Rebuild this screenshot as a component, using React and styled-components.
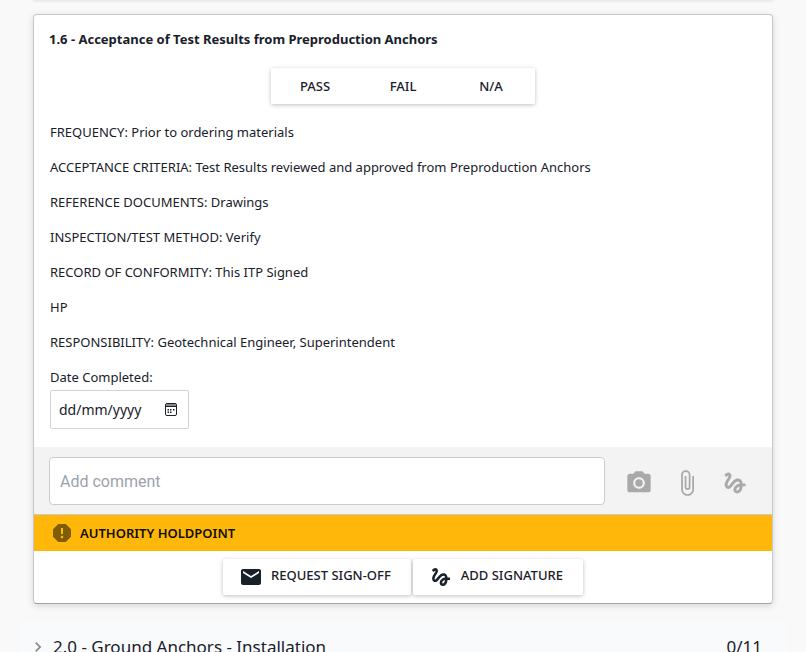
import React, { useState } from "react";
import styled, { createGlobalStyle } from "styled-components";
import {
  MdPhotoCamera,
  MdAttachFile,
  MdGesture,
  MdEmail,
  MdReport,
  MdChevronRight,
} from "react-icons/md";

const INK = "#18202a";
const UI_FONT = '"Segoe UI", "Noto Sans", "Open Sans", sans-serif';

const GlobalStyle = createGlobalStyle`
  *, *::before, *::after { box-sizing: border-box; }
  html, body { margin: 0; height: 100%; overflow: hidden; }
  body { background: #f9f9f9; color: ${INK}; font-family: ${UI_FONT}; font-size: 13px; line-height: 20px; }
  button, input { font: inherit; color: inherit; }
`;

const Page = styled.main`
  display: flex;
  flex-direction: column;
  padding: 0 20px;
`;

const PreviousCard = styled.div`
  height: 0;
  margin: 0 14px;
  box-shadow: 0 0 3px 1px rgba(0, 0, 0, 0.12);
`;

const Card = styled.article`
  margin: 14px 13px 0;
  border: 1px solid #c8c8c8;
  border-bottom-color: #a2a4a4;
  border-radius: 4px;
  background: #fff;
  box-shadow: 0 2px 7px rgba(0, 0, 0, 0.14);
  overflow: hidden;
`;

const CardBody = styled.div`
  padding: 14px 15px 18px;
`;

const Title = styled.h2`
  margin: 0 0 19px;
  font-size: 13px;
  line-height: 20px;
  font-weight: 700;
`;

const RaisedButton = styled.button`
  display: flex;
  align-items: center;
  justify-content: center;
  gap: 8px;
  height: 36px;
  padding: 0 20px 0 16px;
  border: 0;
  border-radius: 2px;
  background: #fff;
  font-weight: 500;
  cursor: pointer;
  box-shadow: 0 1px 4px rgba(0, 0, 0, 0.26);
`;

const ButtonLabel = styled.span`
  padding-bottom: 4px;
`;

const ChoiceGroup = styled.div`
  display: flex;
  width: fit-content;
  margin: 0 auto 18px;
  border-radius: 2px;
  box-shadow: 0 1px 4px rgba(0, 0, 0, 0.26);
`;

const ChoiceButton = styled(RaisedButton)`
  min-width: 88px;
  padding: 0 8px;
  box-shadow: none;
`;

const Detail = styled.p`
  margin: 0 0 15px;
  padding-left: 1px;
`;

const DateField = styled.div`
  display: flex;
  flex-direction: column;
  align-items: flex-start;
  padding-left: 1px;
  gap: 3px;
`;

const DateBox = styled.div`
  display: flex;
  align-items: center;
  width: 139px;
  height: 39px;
  padding: 0 10px 0 8px;
  border: 1px solid #d0d2d4;
  border-radius: 2px;
`;

const DateInput = styled.input`
  flex: 1;
  min-width: 0;
  padding: 0;
  border: 0;
  outline: 0;
  background: none;
  font-size: 14px;
  &::placeholder { color: ${INK}; opacity: 1; }
`;

const IconButton = styled.button`
  display: grid;
  place-items: center;
  padding: 0;
  border: 0;
  background: none;
  color: ${(p) => (p.$muted ? "#a9a9a9" : INK)};
  cursor: pointer;
`;

const CommentBar = styled.div`
  display: flex;
  align-items: center;
  padding: 10px 23px 9px 15px;
  background: #f3f3f3;
  border-bottom: 1px solid #c8c8c8;
`;

const CommentInput = styled.input`
  flex: 1;
  min-width: 0;
  height: 48px;
  padding: 0 10px;
  border: 1px solid #cbcccd;
  border-radius: 4px;
  background: #fff;
  outline: 0;
  font-family: Roboto, sans-serif;
  font-size: 16px;
  &::placeholder { color: #9da2ac; opacity: 1; }
`;

const CommentActions = styled.div`
  display: flex;
  gap: 20px;
  padding: 3px 0 0 20px;
`;

const ActionButton = styled(IconButton)`
  width: 28px;
  height: 28px;
`;

const Holdpoint = styled.div`
  display: flex;
  align-items: center;
  gap: 6px;
  height: 36px;
  padding: 0 16px;
  background: #ffb80a;
  color: #130f05;
  font-weight: 600;
  svg { color: #805c05; }
`;

const CardFooter = styled.footer`
  display: flex;
  justify-content: center;
  gap: 2px;
  padding: 8px;
`;

const SectionHeader = styled.section`
  display: flex;
  align-items: center;
  height: 52px;
  margin-top: 17px;
  padding: 0 24px 0 8px;
  background: #f8fafc;
`;

const SectionTitle = styled.h2`
  flex: 1;
  margin: 0 0 0 5px;
  font-size: 17px;
  font-weight: 400;
`;

const SectionCount = styled.span`
  font-size: 17px;
`;

const CalendarIcon = () => (
  <svg width="14" height="14" viewBox="0 0 14 14" aria-hidden="true">
    <rect x="1.5" y="0.5" width="11" height="12" rx="1.5" fill="none" stroke="currentColor" />
    <path d="M2 1h10v2H2z" fill="#888" />
    <path d="M2 3.5h10" stroke="currentColor" />
    <path
      d="M6 6h1.5v1.5H6zM9 6h1.5v1.5H9zM3.5 8.5H5V10H3.5zM6 8.5h1.5V10H6zM3.5 6H5v1.5H3.5z"
      fill="currentColor"
    />
  </svg>
);

const details = [
  "FREQUENCY: Prior to ordering materials",
  "ACCEPTANCE CRITERIA: Test Results reviewed and approved from Preproduction Anchors",
  "REFERENCE DOCUMENTS: Drawings",
  "INSPECTION/TEST METHOD: Verify",
  "RECORD OF CONFORMITY: This ITP Signed",
  "HP",
  "RESPONSIBILITY: Geotechnical Engineer, Superintendent",
];

export default function App() {
  const [date, setDate] = useState("");
  const [comment, setComment] = useState("");

  return (
    <>
      <GlobalStyle />
      <Page>
        <PreviousCard />
        <Card>
          <CardBody>
            <Title>1.6 - Acceptance of Test Results from Preproduction Anchors</Title>
            <ChoiceGroup role="group" aria-label="Result">
              {["PASS", "FAIL", "N/A"].map((label) => (
                <ChoiceButton key={label} type="button">{label}</ChoiceButton>
              ))}
            </ChoiceGroup>
            {details.map((text) => (
              <Detail key={text}>{text}</Detail>
            ))}
            <DateField>
              <label htmlFor="date-completed">Date Completed:</label>
              <DateBox>
                <DateInput
                  id="date-completed"
                  placeholder="dd/mm/yyyy"
                  value={date}
                  onChange={(e) => setDate(e.target.value)}
                />
                <IconButton type="button" aria-label="Open calendar">
                  <CalendarIcon />
                </IconButton>
              </DateBox>
            </DateField>
          </CardBody>
          <CommentBar>
            <CommentInput
              aria-label="Add comment"
              placeholder="Add comment"
              value={comment}
              onChange={(e) => setComment(e.target.value)}
            />
            <CommentActions>
              <ActionButton $muted type="button" aria-label="Add photo">
                <MdPhotoCamera size={28} />
              </ActionButton>
              <ActionButton $muted type="button" aria-label="Attach file">
                <MdAttachFile size={28} />
              </ActionButton>
              <ActionButton $muted type="button" aria-label="Sign">
                <MdGesture size={28} />
              </ActionButton>
            </CommentActions>
          </CommentBar>
          <Holdpoint>
            <MdReport size={24} />
            AUTHORITY HOLDPOINT
          </Holdpoint>
          <CardFooter>
            <RaisedButton type="button">
              <MdEmail size={24} />
              <ButtonLabel>REQUEST SIGN-OFF</ButtonLabel>
            </RaisedButton>
            <RaisedButton type="button">
              <MdGesture size={24} />
              <ButtonLabel>ADD SIGNATURE</ButtonLabel>
            </RaisedButton>
          </CardFooter>
        </Card>
        <SectionHeader>
          <MdChevronRight size={20} color="#8a8a8a" />
          <SectionTitle>2.0 - Ground Anchors - Installation</SectionTitle>
          <SectionCount>0/11</SectionCount>
        </SectionHeader>
      </Page>
    </>
  );
}
